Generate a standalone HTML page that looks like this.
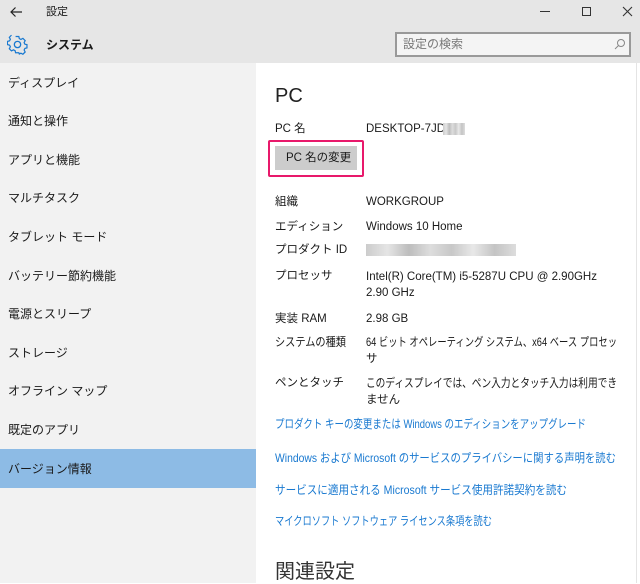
<!DOCTYPE html>
<html><head><meta charset="utf-8"><style>
*{margin:0;padding:0;box-sizing:border-box}
body{width:640px;height:583px;overflow:hidden;background:#fff;font-family:"Liberation Sans","Noto Sans CJK JP",sans-serif;font-size:11.5px;color:#1a1a1a;position:relative}
.a{position:absolute;white-space:nowrap;line-height:16px}
svg text{font-family:"Liberation Sans","Noto Sans CJK JP",sans-serif;font-size:12px;fill:#1a1a1a}
svg.k text{fill:#1979d0}
#hdr{position:absolute;left:0;top:0;width:640px;height:63px;background:#e6e6e6}
#side{position:absolute;left:0;top:63px;width:256px;height:520px;background:#f2f2f2}
.it{position:absolute;left:8px;line-height:16px;font-size:12px}
#sel{position:absolute;left:0;top:449px;width:256px;height:39px;background:#8dbbe5}
.l{left:275px}.v{left:366px}
.blur{position:absolute;background:linear-gradient(90deg,#ccc,#e5e5e5,#bdbdbd,#ddd,#c8c8c8,#e8e8e8,#c4c4c4,#ddd);}
</style></head><body>
<div id="hdr"></div>
<svg class="a" style="left:9px;top:5px" width="14" height="14" viewBox="0 0 14 14"><path d="M13 7H2M6.5 2.5L2 7l4.5 4.5" stroke="#222" stroke-width="1.2" fill="none"/></svg>
<div class="a" style="left:46px;top:4px;font-size:11px">設定</div>
<div class="a" style="left:540px;top:11px;width:10px;height:1px;background:#333"></div>
<div class="a" style="left:582px;top:7px;width:9px;height:9px;border:1px solid #333"></div>
<svg class="a" style="left:622px;top:6px" width="11" height="11"><path d="M1 1L10 10M10 1L1 10" stroke="#333" stroke-width="1.1"/></svg>
<svg class="a" style="left:7px;top:34px" width="21" height="21" viewBox="0 0 24 24"><path d="M10 2h4l.6 2.6 2 1 2.4-1.3 2.8 2.8-1.3 2.4 1 2 2.5.5v4l-2.5.6-1 2 1.3 2.4-2.8 2.8-2.4-1.3-2 1L14 22h-4l-.6-2.6-2-1L5 19.7 2.3 17l1.3-2.4-1-2L0 12v-4l2.6-.6 1-2L2.3 3 5 .3" transform="translate(0.5 1) scale(.93)" fill="none" stroke="#1979d0" stroke-width="1.5"/><circle cx="12" cy="12" r="3.6" fill="none" stroke="#1979d0" stroke-width="1.5"/></svg>
<div class="a" style="left:46px;top:37px;font-weight:bold;font-size:12px">システム</div>
<div class="a" style="left:395px;top:32px;width:236px;height:25px;border:2px solid #999;background:#f4f4f4"></div>
<div class="a" style="left:403px;top:36px;color:#777;font-size:12px">設定の検索</div>
<svg class="a" style="left:614px;top:38px" width="12" height="12"><circle cx="7" cy="5" r="3.5" fill="none" stroke="#888"/><path d="M4.5 7.5L1 11" stroke="#888"/></svg>
<div id="side"></div>
<div id="sel"></div>
<div class="it" style="top:75px">ディスプレイ</div>
<div class="it" style="top:113px">通知と操作</div>
<div class="it" style="top:152px">アプリと機能</div>
<div class="it" style="top:190px">マルチタスク</div>
<div class="it" style="top:229px">タブレット モード</div>
<div class="it" style="top:268px">バッテリー節約機能</div>
<div class="it" style="top:306px">電源とスリープ</div>
<div class="it" style="top:345px">ストレージ</div>
<div class="it" style="top:383px">オフライン マップ</div>
<div class="it" style="top:422px">既定のアプリ</div>
<div class="it" style="top:461px">バージョン情報</div>
<div class="a" style="left:275px;top:84px;font-size:20px;line-height:24px;color:#222">PC</div>
<div class="a l" style="top:121px">PC 名</div>
<div class="a v" style="top:121px">DESKTOP-7JD</div>
<div class="blur" style="left:443px;top:123px;width:22px;height:12px"></div>
<div class="a" style="left:268px;top:140px;width:96px;height:37px;border:2px solid #e8196b;border-radius:2px"></div>
<div class="a" style="left:275px;top:146px;width:82px;height:24px;background:#ccc"></div>
<div class="a" style="left:286px;top:150px">PC 名の変更</div>
<div class="a l" style="top:194px">組織</div><div class="a v" style="top:194px">WORKGROUP</div>
<div class="a l" style="top:219px">エディション</div><div class="a v" style="top:219px">Windows 10 Home</div>
<div class="a l" style="top:242px">プロダクト ID</div>
<div class="blur" style="left:366px;top:244px;width:150px;height:12px"></div>
<div class="a l" style="top:268px">プロセッサ</div>
<svg class="a" style="left:366px;top:268px" width="260" height="16"><text x="0" y="12" textLength="231" lengthAdjust="spacingAndGlyphs">Intel(R) Core(TM) i5-5287U CPU @ 2.90GHz</text></svg>
<div class="a v" style="top:285px">2.90 GHz</div>
<div class="a l" style="top:311px">実装 RAM</div><div class="a v" style="top:311px">2.98 GB</div>
<svg class="a" style="left:275px;top:334px" width="90" height="16"><text x="0" y="12" textLength="71" lengthAdjust="spacingAndGlyphs">システムの種類</text></svg>
<svg class="a" style="left:366px;top:334px" width="260" height="16"><text x="0" y="12" textLength="251" lengthAdjust="spacingAndGlyphs">64 ビット オペレーティング システム、x64 ベース プロセッ</text></svg>
<div class="a v" style="top:351px">サ</div>
<div class="a l" style="top:375px">ペンとタッチ</div>
<svg class="a" style="left:366px;top:375px" width="260" height="16"><text x="0" y="12" textLength="251" lengthAdjust="spacingAndGlyphs">このディスプレイでは、ペン入力とタッチ入力は利用でき</text></svg>
<div class="a v" style="top:392px">ません</div>
<svg class="a k" style="left:275px;top:416px" width="360" height="16"><text x="0" y="12" textLength="311" lengthAdjust="spacingAndGlyphs">プロダクト キーの変更または Windows のエディションをアップグレード</text></svg>
<svg class="a k" style="left:275px;top:450px" width="360" height="16"><text x="0" y="12" textLength="341" lengthAdjust="spacingAndGlyphs">Windows および Microsoft のサービスのプライバシーに関する声明を読む</text></svg>
<svg class="a k" style="left:275px;top:482px" width="360" height="16"><text x="0" y="12" textLength="292" lengthAdjust="spacingAndGlyphs">サービスに適用される Microsoft サービス使用許諾契約を読む</text></svg>
<svg class="a k" style="left:275px;top:513px" width="360" height="16"><text x="0" y="12" textLength="217" lengthAdjust="spacingAndGlyphs">マイクロソフト ソフトウェア ライセンス条項を読む</text></svg>
<div class="a" style="left:275px;top:560px;font-size:20px;line-height:24px;color:#333">関連設定</div>
<div class="a" style="left:636px;top:63px;width:1px;height:520px;background:#e4e4e4"></div>
</body></html>
